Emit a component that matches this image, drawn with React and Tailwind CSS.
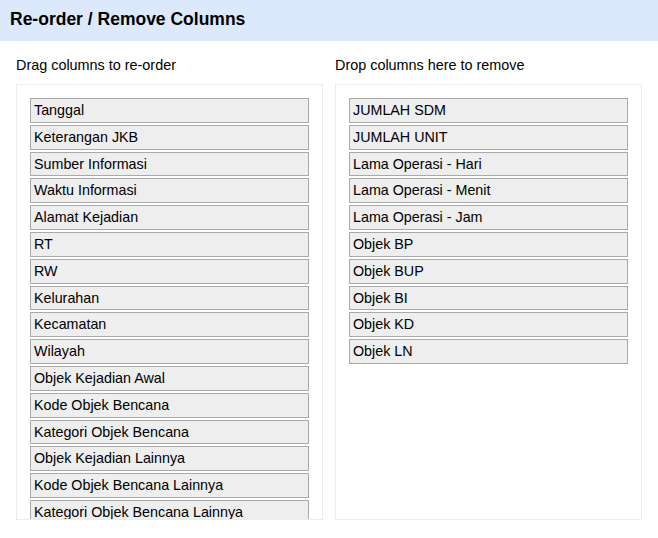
const visibleColumns = [
  "Tanggal",
  "Keterangan JKB",
  "Sumber Informasi",
  "Waktu Informasi",
  "Alamat Kejadian",
  "RT",
  "RW",
  "Kelurahan",
  "Kecamatan",
  "Wilayah",
  "Objek Kejadian Awal",
  "Kode Objek Bencana",
  "Kategori Objek Bencana",
  "Objek Kejadian Lainnya",
  "Kode Objek Bencana Lainnya",
  "Kategori Objek Bencana Lainnya",
];

const removedColumns = [
  "JUMLAH SDM",
  "JUMLAH UNIT",
  "Lama Operasi - Hari",
  "Lama Operasi - Menit",
  "Lama Operasi - Jam",
  "Objek BP",
  "Objek BUP",
  "Objek BI",
  "Objek KD",
  "Objek LN",
];

function ColumnItem({ name }) {
  return (
    <li className="h-[24.8px] shrink-0 border border-[#a9a9a9] bg-[#eeeeee] px-[3px] text-[14.3px] leading-[22.8px] text-black whitespace-nowrap overflow-hidden">
      {name}
    </li>
  );
}

function ColumnPanel({ label, columns }) {
  return (
    <div className="flex flex-col">
      <p className="h-[16px] text-[14.4px] leading-[16px] text-black mb-[11px]">
        {label}
      </p>
      <div className="h-[436px] border border-[#ececec] overflow-hidden pt-[13px] px-[13px]">
        <ul className="flex flex-col gap-[2px]">
          {columns.map((name) => (
            <ColumnItem key={name} name={name} />
          ))}
        </ul>
      </div>
    </div>
  );
}

export default function App() {
  return (
    <div className="w-[658px] h-[538px] bg-white font-['Liberation_Sans',Arial,sans-serif]">
      {/* Header */}
      <div className="h-[41px] bg-[#dce9fc] flex items-center px-[10px]">
        <h1 className="text-[17.5px] font-bold text-black leading-none -mt-[2px]">
          Re-order / Remove Columns
        </h1>
      </div>

      {/* Panels */}
      <div className="grid grid-cols-[307px_307px] gap-[12px] px-[16px] pt-[16px]">
        <ColumnPanel
          label="Drag columns to re-order"
          columns={visibleColumns}
        />
        <ColumnPanel
          label="Drop columns here to remove"
          columns={removedColumns}
        />
      </div>
    </div>
  );
}
